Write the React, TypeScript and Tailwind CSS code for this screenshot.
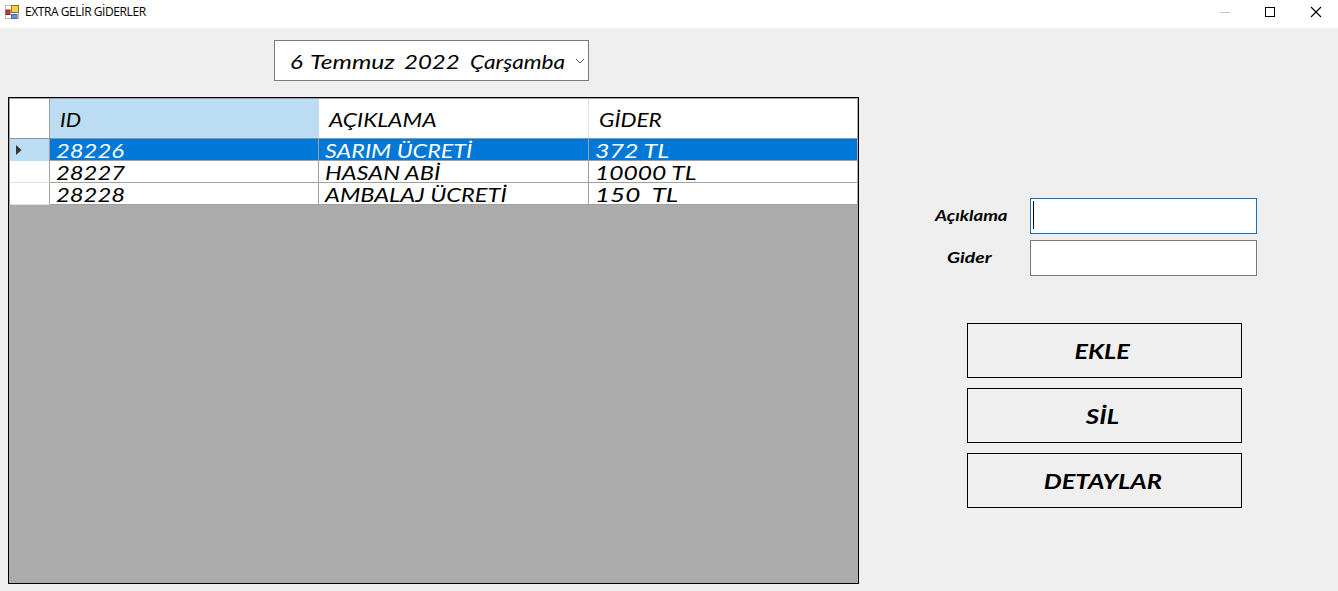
import type { ReactNode } from "react";

const rows = [
  { id: "28226", aciklama: "SARIM ÜCRETİ", gider: "372 TL", stretch: ["scale-x-[1.19]", "scale-x-[1.165]", "scale-x-[1.25]"] },
  { id: "28227", aciklama: "HASAN ABİ", gider: "10000 TL", stretch: ["scale-x-[1.19]", "scale-x-[1.18]", "scale-x-[1.23]"] },
  { id: "28228", aciklama: "AMBALAJ ÜCRETİ", gider: "150  TL", stretch: ["scale-x-[1.19]", "scale-x-[1.18]", "scale-x-[1.3]"] },
];

function Wide({ className, children }: { className: string; children: ReactNode }) {
  return <span className={`inline-block origin-left ${className}`}>{children}</span>;
}

function FormIcon() {
  return (
    <svg className="ml-[5px] h-[14px] w-[14px]" viewBox="0 0 14 14">
      <rect x="0.5" y="0.5" width="13" height="13" fill="#fff" stroke="#b9b9b9" />
      <rect x="6.5" y="0.5" width="7" height="7" fill="#f9cf45" stroke="#8b7330" />
      <rect x="1" y="5" width="4" height="4.5" fill="#d8362d" stroke="#8e2a28" />
      <rect x="6.5" y="9.5" width="5.5" height="4" fill="#5c94e5" stroke="#3f6eb5" />
    </svg>
  );
}

function TitleBar() {
  return (
    <header className="flex h-7 shrink-0 items-start bg-white">
      <div className="flex h-6 items-center">
        <FormIcon />
        <span className="ml-[6px] font-['Open_Sans',sans-serif] text-[12px] leading-6 tracking-[-0.42px] text-black">
          EXTRA GELİR GİDERLER
        </span>
      </div>
      <svg className="ml-auto h-6 w-[138px]" viewBox="0 0 138 24" fill="none">
        <path d="M20 12.5h10" stroke="#c4c4c4" />
        <rect x="65.5" y="7.5" width="9" height="9" stroke="#000" />
        <path d="M111 7l10 10M121 7l-10 10" stroke="#000" strokeWidth="1.1" />
      </svg>
    </header>
  );
}

function HeadCell({ className, children }: { className: string; children?: ReactNode }) {
  return <div className={`h-full pl-[10px] leading-[40px] ${className}`}>{children}</div>;
}

function Grid() {
  return (
    <section className="h-[487px] w-[851px] border border-black bg-[#ababab] pr-px text-[20px] italic">
      <div className="flex h-[41px] border-t border-b border-l border-t-[#a0a0a0] border-b-[#8f9499] border-l-[#a0a0a0] bg-white">
        <HeadCell className="w-10 border-r border-[#a0a0a0]" />
        <HeadCell className="w-[269px] bg-[#bcdcf4]">
          <Wide className="scale-x-[1.08]">ID</Wide>
        </HeadCell>
        <HeadCell className="w-[270px] border-r border-[#e2e2e2]">
          <Wide className="scale-x-[1.14]">AÇIKLAMA</Wide>
        </HeadCell>
        <HeadCell className="flex-1">
          <Wide className="scale-x-[1.13]">GİDER</Wide>
        </HeadCell>
      </div>
      {rows.map((r, i) => (
        <div
          key={r.id}
          className={`flex h-[22px] border-l border-[#a0a0a0] leading-[23px] whitespace-pre ${i === 0 ? "bg-[#0078d7] text-white" : "bg-white text-black"}`}
        >
          <div
            className={`flex w-10 items-center border-r border-r-[#a0a0a0] pl-[6px] ${i === 0 ? "bg-[#bcdcf4]" : "border-b border-b-[#e2e2e2] bg-white"}`}
          >
            {i === 0 && (
              <svg className="h-[10px] w-[6px]" viewBox="0 0 6 10">
                <path d="M0 0l5.5 5L0 10z" fill="#333" />
              </svg>
            )}
          </div>
          <div className="w-[269px] border-r border-b border-[#a0a0a0] pl-[6px]">
            <Wide className={r.stretch[0]}>{r.id}</Wide>
          </div>
          <div className="w-[270px] border-r border-b border-[#a0a0a0] pl-[6px]">
            <Wide className={r.stretch[1]}>{r.aciklama}</Wide>
          </div>
          <div className="flex-1 border-b border-[#a0a0a0] pl-[6px]">
            <Wide className={r.stretch[2]}>{r.gider}</Wide>
          </div>
        </div>
      ))}
    </section>
  );
}

function Field({ label, focused, className, stretch }: { label: string; focused?: boolean; className: string; stretch: string }) {
  return (
    <div className="flex h-9 items-center">
      <div className={`h-9 w-[103px] text-[16px] leading-[34px] font-bold italic ${className}`}>
        <Wide className={stretch}>{label}</Wide>
      </div>
      <div className={`h-9 w-[227px] border bg-white pt-[2px] pl-[2px] ${focused ? "border-[#1a6fb5]" : "border-[#7a7a7a]"}`}>
        {focused && <div className="h-7 w-px bg-black" />}
      </div>
    </div>
  );
}

function FlatButton({ label, stretch }: { label: string; stretch: string }) {
  return (
    <button className="h-[55px] w-[275px] border border-black pt-px pr-1 text-[21px] font-bold italic">
      <span className={`inline-block ${stretch}`}>{label}</span>
    </button>
  );
}

export default function App() {
  return (
    <div className="flex h-[591px] w-[1338px] flex-col overflow-hidden bg-[#efefef] font-['Lato','Open_Sans',sans-serif] text-black">
      <TitleBar />
      <main className="flex">
        <div className="ml-2 w-[851px] pt-3">
          <div className="ml-[266px] flex h-[41px] w-[315px] items-center justify-between border border-[#7a7a7a] bg-white pr-[3px] pl-[15px]">
            <div className="flex pt-px text-[20px] whitespace-nowrap italic">
              <div className="w-[20px]">
                <Wide className="scale-x-[1.2]">6</Wide>
              </div>
              <div className="w-[94px]">
                <Wide className="scale-x-[1.23]">Temmuz</Wide>
              </div>
              <div className="w-[66px]">
                <Wide className="scale-x-[1.2]">2022</Wide>
              </div>
              <Wide className="scale-x-[1.13]">Çarşamba</Wide>
            </div>
            <svg className="h-[6px] w-[10px] shrink-0" viewBox="0 0 10 6" fill="none">
              <path d="M1 1l4 4 4-4" stroke="#555" />
            </svg>
          </div>
          <div className="mt-4">
            <Grid />
          </div>
        </div>
        <div className="ml-[68px] pt-[170px]">
          <div className="flex flex-col gap-[6px]">
            <Field label="Açıklama" focused className="pl-2" stretch="scale-x-[1.16]" />
            <Field label="Gider" className="pl-5" stretch="scale-x-[1.21]" />
          </div>
          <div className="mt-[47px] ml-10 flex flex-col gap-[10px]">
            <FlatButton label="EKLE" stretch="scale-x-[1.2]" />
            <FlatButton label="SİL" stretch="scale-x-[1.24]" />
            <FlatButton label="DETAYLAR" stretch="scale-x-[1.21]" />
          </div>
        </div>
      </main>
    </div>
  );
}
